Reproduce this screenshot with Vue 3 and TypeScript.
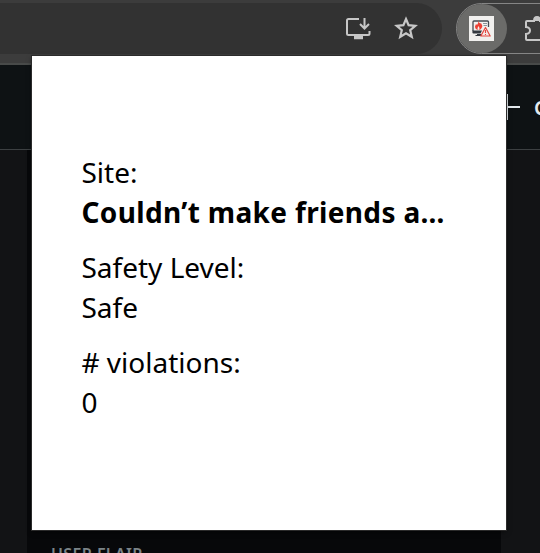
<script setup lang="ts">
interface Field {
  label: string
  value: string
  kind: string
}

const fields: Field[] = [
  { label: 'Site:', value: 'Couldn’t make friends a…', kind: 'site' },
  { label: 'Safety Level:', value: 'Safe', kind: 'level' },
  { label: '# violations:', value: '0', kind: 'count' },
]
</script>

<template>
  <div class="window">
    <header class="toolbar">
      <div class="omnibox">
        <svg class="install" width="26" height="24" viewBox="0 0 26 24" fill="none" stroke="#c7c7c7" stroke-width="2">
          <path d="M14 2H3.500Q2 2 2 3.500V16.500Q2 18 3.500 18H23Q24.500 18 24.500 16.500V14" />
          <path d="M19.500 1V11M15 7L19.500 11.500L24 7" />
          <path d="M9 20.500H18" stroke-width="3.500" />
        </svg>
        <svg class="star" width="24" height="24" viewBox="0 0 24 24" fill="none" stroke="#c7c7c7" stroke-width="2.200">
          <path d="M12 3L14.600 9.200L21.300 9.800L16.200 14.200L17.800 20.800L12 17.200L6.200 20.800L7.800 14.200L2.700 9.800L9.400 9.200Z" />
        </svg>
      </div>
      <div class="extensions">
        <div class="active-extension">
          <svg width="25" height="25" viewBox="0 0 25 25">
            <rect width="25" height="25" fill="#f1f0ee" />
            <path d="M4 15V6Q4 5 5 5H18.500Q19.500 5 19.500 6V11" fill="none" stroke="#454b53" stroke-width="1.300" />
            <path d="M3.400 14.500H13L11.500 17.500H4.500Q3.400 17.500 3.400 16.500ZM8 18H12V20H6.500V19H8Z" fill="#343940" />
            <path d="M14 7.500H18M14.500 9.500H18" stroke="#8b9299" />
            <path d="M9.500 5Q10 7 11.500 7.500L12 7Q14 9.500 12.700 12Q11.800 14 9.500 14Q6 13.500 6 10.500L7 8L8 9Q9.500 7.500 9.500 5Z" fill="#ed4135" />
            <path d="M9.500 10Q11.500 13 9.500 14Q7.500 13 9.500 10Z" fill="#f1f0ee" />
            <path d="M16.500 11.500L21.200 20H11.800Z" fill="#f5e9e7" stroke="#e44840" stroke-width="1.200" stroke-linejoin="round" />
            <path d="M16.500 14V17M16.500 18V19" stroke="#e44840" stroke-width="1.100" />
          </svg>
        </div>
        <svg class="puzzle" width="26" height="28" viewBox="0 0 26 28" fill="none" stroke="#c7c7c7" stroke-width="2">
          <path d="M3 5H10Q10 1 13 1Q16 1 16 5H22V24H3Q2 24 2 23V18Q6 17.500 6 14.500Q6 11.500 2 11V6Q2 5 3 5Z" />
          <path d="M10 5Q10 1 13 1Q16 1 16 5Z" fill="#c7c7c7" stroke="none" />
        </svg>
      </div>
    </header>

    <main class="page">
      <div class="site-header">
        <svg width="24" height="28" viewBox="0 0 24 28" fill="none" stroke="#e3e9ed" stroke-width="2">
          <path d="M11 1V27M0 14H24" />
        </svg>
        <span class="create">Create</span>
      </div>
      <div class="content">
        <aside class="sidebar">
          <h2>USER FLAIR</h2>
        </aside>
      </div>
    </main>

    <section class="popup">
      <div v-for="field in fields" :key="field.label" class="field" :class="field.kind">
        <div><span class="label">{{ field.label }}</span></div>
        <div><span class="value">{{ field.value }}</span></div>
      </div>
    </section>
  </div>
</template>

<style>
body {
  margin: 0;
  overflow: hidden;
}
</style>

<style scoped>
.window {
  position: relative;
  display: flex;
  flex-direction: column;
  width: 540px;
  height: 553px;
  overflow: hidden;
  background: #121315;
  font-family: "Noto Sans", "Open Sans", sans-serif;
}
svg {
  display: block;
  flex: none;
}
.toolbar {
  box-sizing: border-box;
  display: flex;
  flex: none;
  gap: 14px;
  height: 65px;
  padding-top: 3px;
  background: #3c3c3c;
  border-bottom: 2px solid #484a49;
}
.omnibox {
  box-sizing: border-box;
  display: flex;
  flex: none;
  justify-content: flex-end;
  gap: 23px;
  width: 442px;
  height: 51px;
  padding: 14px 24px 0 0;
  border-radius: 0 26px 26px 0;
  background: #323232;
}
.star {
  margin-top: -1px;
}
.extensions {
  box-sizing: border-box;
  display: flex;
  flex: none;
  gap: 17px;
  width: 110px;
  height: 51px;
  border: 1px solid #858585;
  border-radius: 26px 0 0 26px;
}
.active-extension {
  box-sizing: border-box;
  display: flex;
  flex: none;
  align-items: center;
  justify-content: center;
  width: 50px;
  height: 49px;
  padding-right: 1px;
  border-radius: 50%;
  background: #6b6b69;
}
.puzzle {
  margin-top: 12px;
}
.page {
  display: flex;
  flex: 1;
  flex-direction: column;
}
.site-header {
  box-sizing: border-box;
  display: flex;
  flex: none;
  gap: 14px;
  height: 85px;
  padding: 28px 0 0 496px;
  border-bottom: 1px solid #3c4042;
  background: #0e1214;
}
.create {
  color: #e3e9ed;
  font-size: 20px;
  font-weight: 600;
  line-height: 30px;
}
.content {
  display: flex;
  flex: 1;
  padding: 0 39px 0 27px;
}
.sidebar {
  flex: 1;
  padding: 392px 0 0 24px;
  background: #07080a;
}
.sidebar h2 {
  margin: 0;
  color: #7b8488;
  font-size: 16px;
  font-weight: 600;
  letter-spacing: 0.35px;
  line-height: 24px;
  white-space: nowrap;
}
.popup {
  position: absolute;
  top: 56px;
  left: 32px;
  box-sizing: border-box;
  width: 474px;
  height: 474px;
  padding: 96px 50px 0 49.500px;
  background: #fff;
  box-shadow: 0 0 0 1px #2b2b2b, 0 2px 5px rgba(0, 0, 0, 0.5);
  color: #000;
  font-size: 28px;
  line-height: 40px;
  white-space: nowrap;
}
.field {
  margin-bottom: 15px;
}
.site .value {
  font-weight: 700;
  letter-spacing: 0.35px;
}
</style>
